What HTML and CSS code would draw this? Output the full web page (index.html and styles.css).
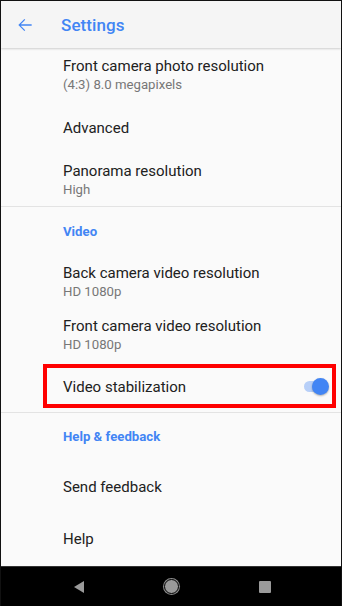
FILE: index.html
```html
<!DOCTYPE html>
<html lang="en">
  <head>
    <meta charset="UTF-8" />
    <meta name="viewport" content="width=device-width, initial-scale=1.0" />
    <title>Settings</title>
    <link rel="stylesheet" href="styles.css">
  </head>
  <body>
    <div class="phone">
      <header class="app-bar">
        <svg class="back-icon" viewBox="0 0 24 24" width="20" height="20">
          <path d="M20 11.2H6.9l5.4-5.4-1.1-1.1L4 12l7.2 7.3 1.1-1.1-5.4-5.4H20z" fill="#4285f4" />
        </svg>
        <span class="app-title">Settings</span>
      </header>

      <main class="settings">
        <div class="pref">
          <span class="pref-title">Front camera photo resolution</span>
          <span class="pref-summary">(4:3) 8.0 megapixels</span>
        </div>
        <div class="pref">
          <span class="pref-title">Advanced</span>
        </div>
        <div class="pref pref-last">
          <span class="pref-title">Panorama resolution</span>
          <span class="pref-summary">High</span>
        </div>

        <div class="category">Video</div>
        <div class="pref">
          <span class="pref-title">Back camera video resolution</span>
          <span class="pref-summary">HD 1080p</span>
        </div>
        <div class="pref">
          <span class="pref-title">Front camera video resolution</span>
          <span class="pref-summary">HD 1080p</span>
        </div>
        <div class="pref pref-switch pref-last">
          <span class="pref-title">Video stabilization</span>
          <span class="switch">
            <span class="switch-track"></span>
            <span class="switch-thumb"></span>
          </span>
          <!-- red highlight box -->
          <span class="highlight"></span>
        </div>

        <div class="category category-help">Help &amp; feedback</div>
        <div class="pref">
          <span class="pref-title">Send feedback</span>
        </div>
        <div class="pref pref-end">
          <span class="pref-title">Help</span>
        </div>
      </main>

      <nav class="nav-bar">
        <span class="nav-back"></span>
        <span class="nav-home"></span>
        <span class="nav-recent"></span>
      </nav>
    </div>
  </body>
</html>
```
FILE: styles.css
```css
* {
  box-sizing: border-box;
}

body {
  margin: 0;
  background: #000;
  font-family: Roboto, "Noto Sans", sans-serif;
}

.phone {
  width: 342px;
  height: 606px;
  border: 1px solid #111;
  border-bottom: none;
  display: flex;
  flex-direction: column;
  background: #fafafa;
  overflow: hidden;
}

/* Top app bar */
.app-bar {
  height: 47px;
  flex-shrink: 0;
  display: flex;
  align-items: center;
  background: #f5f5f5;
  box-shadow: 0 1px 2px rgba(0, 0, 0, 0.18);
  position: relative;
  z-index: 1;
}

.back-icon {
  margin-left: 14px;
  margin-top: 1px;
}

.app-title {
  margin-left: 26px;
  font-size: 17px;
  font-weight: 500;
  color: #4285f4;
  letter-spacing: 0.1px;
}

/* List */
.settings {
  flex: 1;
  display: flex;
  flex-direction: column;
}

.pref {
  height: 53px;
  flex-shrink: 0;
  display: flex;
  flex-direction: column;
  justify-content: center;
  padding-left: 62px;
  position: relative;
}

.pref-last {
  border-bottom: 1px solid #e3e3e3;
}

.pref-end {
  height: 52px;
}

.pref-title {
  font-size: 15px;
  line-height: 20px;
  color: #212121;
}

.pref-summary {
  font-size: 13.2px;
  line-height: 18px;
  color: #777;
}

.category {
  height: 48px;
  flex-shrink: 0;
  display: flex;
  align-items: center;
  padding-left: 62px;
  font-size: 13.2px;
  font-weight: 700;
  color: #4285f4;
}

.category-help {
  height: 47px;
}

/* Switch */
.pref-switch {
  height: 52px;
  flex-direction: row;
  align-items: center;
  justify-content: space-between;
  padding-right: 10px;
}

.switch {
  position: relative;
  width: 28px;
  height: 18px;
}

.switch-track {
  position: absolute;
  left: 1px;
  top: 3px;
  width: 22px;
  height: 11px;
  border-radius: 6px;
  background: #b7cff8;
}

.switch-thumb {
  position: absolute;
  right: 2px;
  top: 0;
  width: 17px;
  height: 17px;
  border-radius: 50%;
  background: #4285f4;
  box-shadow: 0 1px 2px rgba(0, 0, 0, 0.3);
}

.highlight {
  position: absolute;
  left: 42px;
  top: 3px;
  width: 293px;
  height: 44px;
  border: 4px solid #f00;
}

/* Navigation bar */
.nav-bar {
  height: 40px;
  flex-shrink: 0;
  background: #000;
  border-top: 1px solid #333;
  display: flex;
  align-items: center;
  justify-content: center;
  gap: 80px;
  padding-left: 2px;
}

.nav-back {
  width: 0;
  height: 0;
  border-top: 6px solid transparent;
  border-bottom: 6px solid transparent;
  border-right: 10px solid #9a9a9a;
}

.nav-home {
  width: 15px;
  height: 15px;
  border-radius: 50%;
  background: #9a9a9a;
  border: 1.5px solid #000;
  box-shadow: 0 0 0 1px #8a8a8a;
}

.nav-recent {
  width: 12px;
  height: 12px;
  border-radius: 1px;
  background: #9a9a9a;
}
```
